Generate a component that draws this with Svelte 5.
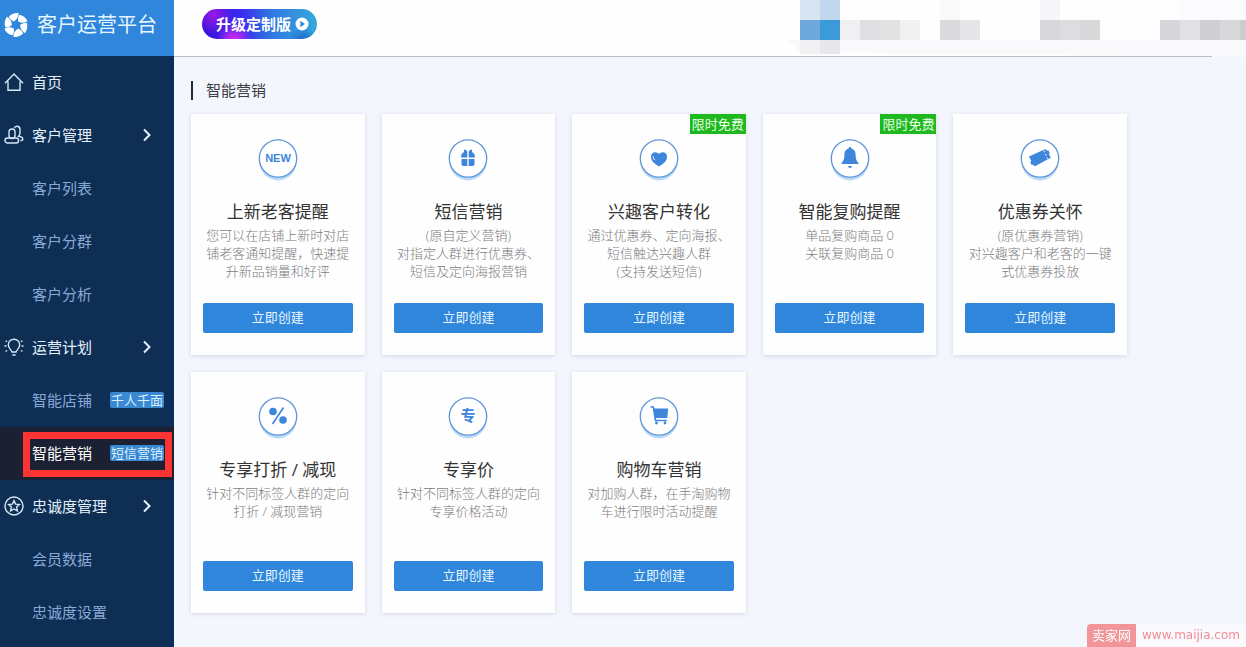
<script>
  const menu = [
    { label: '首页', icon: 'home' },
    { label: '客户管理', icon: 'users', group: true },
    { label: '客户列表' },
    { label: '客户分群' },
    { label: '客户分析' },
    { label: '运营计划', icon: 'bulb', group: true },
    { label: '智能店铺', tag: '千人千面' },
    { label: '智能营销', tag: '短信营销', active: true },
    { label: '忠诚度管理', icon: 'star', group: true },
    { label: '会员数据' },
    { label: '忠诚度设置' }
  ];

  const cards = [
    { icon: 'new', title: '上新老客提醒', lines: ['您可以在店铺上新时对店', '铺老客通知提醒，快速提', '升新品销量和好评'] },
    { icon: 'gift', title: '短信营销', lines: ['(原自定义营销)', '对指定人群进行优惠券、', '短信及定向海报营销'] },
    { icon: 'heart', title: '兴趣客户转化', free: true, lines: ['通过优惠券、定向海报、', '短信触达兴趣人群', '(支持发送短信)'] },
    { icon: 'bell', title: '智能复购提醒', free: true, lines: ['单品复购商品 0', '关联复购商品 0'] },
    { icon: 'ticket', title: '优惠券关怀', lines: ['(原优惠券营销)', '对兴趣客户和老客的一键', '式优惠券投放'] },
    { icon: 'percent', title: '专享打折 / 减现', lines: ['针对不同标签人群的定向', '打折 / 减现营销'] },
    { icon: 'special', title: '专享价', lines: ['针对不同标签人群的定向', '专享价格活动'] },
    { icon: 'cart', title: '购物车营销', lines: ['对加购人群，在手淘购物', '车进行限时活动提醒'] }
  ];

  // account area is masked with 20px blocks: x, y, width, height, colour
  const blocks = [
    [20, 0, 20, 20, '#d7e4f2'],
    [40, 0, 20, 20, '#c1d7ee'],
    [160, 0, 20, 20, '#f9f9fa'],
    [260, 0, 20, 20, '#f7f7f9'],
    [400, 0, 66, 20, '#fbfafc'],
    [20, 20, 20, 20, '#6fa8dc'],
    [40, 20, 20, 20, '#3b9bd9'],
    [60, 20, 20, 20, '#f0f0f2'],
    [80, 20, 20, 20, '#dfdee0'],
    [100, 20, 20, 20, '#e2e2e3'],
    [120, 20, 20, 20, '#f1f1f3'],
    [160, 20, 20, 20, '#dadadc'],
    [180, 20, 20, 20, '#e5e5e7'],
    [260, 20, 20, 20, '#d8d8da'],
    [280, 20, 20, 20, '#dddde0'],
    [300, 20, 20, 20, '#d9d9dc'],
    [380, 20, 20, 20, '#d6d5d9'],
    [400, 20, 20, 20, '#e1e1e4'],
    [420, 20, 20, 20, '#cfced2'],
    [440, 20, 20, 20, '#d7d8da'],
    [460, 20, 6, 20, '#cccccf'],
    [20, 40, 20, 14, '#f1f0f3'],
    [40, 40, 20, 14, '#e7e7ec']
  ];
</script>

<div class="layout">
  <aside class="sidebar">
    <div class="brand">
      <svg class="brand-logo" viewBox="0 0 26 26" aria-hidden="true">
        {#each [0, 60, 120, 180, 240, 300] as angle}
          <path d="M5.800 4.800C8.400 1.800 12 .6 15.600 1.200 15.600 4.600 14 7.400 11 9.400 8.800 8.600 6.800 7.200 5.800 4.800z" transform="rotate({angle} 13 13)" />
        {/each}
      </svg>
      <span>客户运营平台</span>
    </div>

    <nav>
      {#each menu as item}
        <a href="#menu" class="menu-item" class:top={item.icon} class:active={item.active}>
          <span class="menu-icon">
            {#if item.icon === 'home'}
              <svg viewBox="0 0 20 20"><path d="M1 11.2 10 2l9 9.2M4 9.5V18.2h12V9.5" /></svg>
            {:else if item.icon === 'users'}
              <svg viewBox="0 0 20 20">
                <rect x="5" y="4" width="6" height="9.5" rx="3" />
                <path d="M10.2 3.2C10.6 1.8 11.8 1.2 13 1.2c1.8 0 3 1.3 3 3.2v3c0 1.8-.4 2.8-1.4 3.8 2.8.4 4.2 1.4 4.2 3 0 .9-.6 1.3-2.4 1.3" />
                <rect x="1" y="13" width="13.6" height="5" rx="2.5" />
              </svg>
            {:else if item.icon === 'bulb'}
              <svg viewBox="0 0 20 20">
                <path d="M8 15C7.600 13 4.300 11.800 4.300 7.800 4.300 4.600 6.800 2.200 10 2.200s5.700 2.400 5.700 5.600c0 4-3.300 5.200-3.700 7.200zM8.400 18h3.200M0.500 9h2M17.500 9h2M1.600 3.800l1.500.9M18.400 3.800l-1.500.9M1.600 14.400l1.500-.9M18.400 14.400l-1.500-.9" />
              </svg>
            {:else if item.icon === 'star'}
              <svg viewBox="0 0 20 20">
                <circle cx="10" cy="10" r="9" />
                <path d="M10 4.600l1.600 3.500 3.800.4-2.800 2.600.8 3.800L10 13l-3.400 1.900.8-3.800-2.800-2.600 3.800-.4z" />
              </svg>
            {/if}
          </span>
          <span class="menu-label">{item.label}</span>
          {#if item.tag}
            <span class="menu-tag">{item.tag}</span>
          {/if}
          {#if item.group}
            <svg class="arrow" viewBox="0 0 10 14"><path d="M2 1.500 7.500 7 2 12.500" /></svg>
          {/if}
        </a>
      {/each}
    </nav>
  </aside>

  <div class="content">
    <header class="topbar">
      <button class="upgrade">
        <span>升级定制版</span>
        <svg viewBox="0 0 14 14" aria-hidden="true">
          <circle cx="7" cy="7" r="6.500" />
          <path d="M5.300 3.800 10 7 5.300 10.200z" />
        </svg>
      </button>
      <svg class="account" viewBox="0 0 466 56" aria-hidden="true">
        <path class="haze" d="M8 40H466V56H350L20 52z" />
        {#each blocks as [x, y, w, h, fill]}
          <rect {x} {y} width={w} height={h} {fill} />
        {/each}
      </svg>
    </header>

    <main>
      <h2>智能营销</h2>
      <div class="cards">
        {#each cards as card}
          <section class="card">
            {#if card.free}
              <span class="free">限时免费</span>
            {/if}
            <svg class="card-icon" viewBox="0 0 42 44" aria-hidden="true">
              <circle class="shade" cx="21" cy="24" r="18.500" />
              <circle class="ring" cx="21" cy="20.500" r="18.700" />
              {#if card.icon === 'new'}
                <text class="new" x="21" y="24">NEW</text>
              {:else if card.icon === 'gift'}
                <path d="M14 19.500q0-4 3.200-5.400-1.200-1.800.3-2.500 1.900 0 2.800 2.200V19.500zM28 19.500q0-4-3.200-5.400 1.200-1.800-.3-2.500-1.900 0-2.800 2.200V19.500zM14.500 21h5.800V28H16.500q-2 0-2-2zM27.500 21h-5.800V28H25.500q2 0 2-2z" />
              {:else if card.icon === 'heart'}
                <path d="M21 28.500c-4-2.600-8-5.400-8-9.600 0-3 2-4.600 4.200-4.600 1.600 0 2.900.7 3.800 1.800.9-1.100 2.200-1.800 3.800-1.800 2.200 0 4.200 1.600 4.200 4.600 0 4.200-4 7-8 9.600z" />
                <path class="glint" d="M15.200 18.600q.1 2 1.600 3.600" />
              {:else if card.icon === 'bell'}
                <path d="M19.600 10.500q0-1.400 1.400-1.400t1.400 1.400c3 .8 4.200 3.200 4.200 6.200 0 4.400 1 6.400 2.800 8v1.300H12.600v-1.300c1.800-1.600 2.800-3.600 2.800-8 0-3 1.200-5.400 4.200-6.200zM19 28h4q-.5 2-2 2t-2-2z" />
              {:else if card.icon === 'ticket'}
                <path d="M10 18.500 26.500 11q.6 2.200 2.900 1.300l1.300 2.900q-1.400 1.300.1 2.800l1.200 1.600L15.600 28.600q-.4-2.400-3-1.500l-1.300-3q1.700-1.300.2-2.700z" />
                <path class="glint" d="M24.800 12.600l.8 1.700M26.400 16l.8 1.700M28 19.400l.5 1.200" />
              {:else if card.icon === 'percent'}
                <circle cx="16" cy="15.500" r="3.800" />
                <circle cx="26" cy="24" r="3.800" />
                <path class="line" d="M26.500 11.500 15.500 28" />
              {:else if card.icon === 'special'}
                <text class="char" x="21" y="25">专</text>
              {:else if card.icon === 'cart'}
                <path d="M15.500 12.500H30.200l-1 9.500H17.200z" />
                <path class="line" d="M12.500 11h2.800l2.200 13.500h11.300" />
                <circle cx="18.500" cy="27" r="1.400" />
                <circle cx="27" cy="27" r="1.400" />
              {/if}
            </svg>
            <h3>{card.title}</h3>
            <p>
              {#each card.lines as line}
                <span>{line}</span>
              {/each}
            </p>
            <button class="create">立即创建</button>
          </section>
        {/each}
      </div>
    </main>
  </div>

  <div class="watermark">
    <span class="site">卖家网</span>
    <span class="url">www.maijia.com</span>
  </div>
</div>

<style>
  :global(body) {
    font-family: "Open Sans", "Noto Sans CJK SC", sans-serif;
    background: #f4f6fe;
  }

  .layout {
    display: flex;
    min-height: 100vh;
  }

  .sidebar {
    flex: 0 0 174px;
    background: linear-gradient(90deg, #0f2e54 95%, #0b2b60);
  }

  .brand {
    display: flex;
    align-items: center;
    gap: 8px;
    height: 56px;
    padding: 0 0 6px 3px;
    box-sizing: border-box;
    background: #2f86db;
    color: #e6f6ff;
    font-size: 20px;
    line-height: 28px;
    white-space: nowrap;
  }

  .brand-logo {
    width: 26px;
    height: 26px;
    fill: #fff;
  }

  .menu-item {
    position: relative;
    display: flex;
    align-items: center;
    height: 53px;
    padding: 0 10px 2px 4px;
    box-sizing: border-box;
    color: #87a9d6;
    font-size: 15px;
    line-height: 20px;
    text-decoration: none;
    white-space: nowrap;
  }

  .menu-item.top {
    color: #e4f1fc;
  }

  .menu-item.active {
    background: #1c2033;
    color: #fff;
  }

  /* highlight frame round the current entry */
  .menu-item.active::after {
    content: "";
    position: absolute;
    inset: 5px 2px 3px 23px;
    border: 7px solid #fd3433;
  }

  .menu-icon {
    flex: 0 0 28px;
    height: 20px;
  }

  .menu-icon svg {
    width: 20px;
    height: 20px;
    fill: none;
    stroke: #d5e8f8;
    stroke-width: 1.4;
  }

  .menu-tag {
    margin-left: auto;
    padding: 0 1px;
    border-radius: 2px;
    background: #3a87d2;
    color: #d9f0ff;
    font-size: 13px;
    line-height: 16px;
  }

  .arrow {
    width: 10px;
    height: 14px;
    margin: 0 12px 0 auto;
    fill: none;
    stroke: #e4f1fc;
    stroke-width: 2;
  }

  .content {
    flex: 1;
    min-width: 0;
  }

  .topbar {
    display: flex;
    align-items: flex-start;
    justify-content: space-between;
    height: 57px;
    box-sizing: border-box;
    padding-left: 28px;
    border-bottom: 1px solid;
    border-image: linear-gradient(90deg, #bcbbc4 calc(100% - 35px), #f9f9fb calc(100% - 35px)) 1;
    background: #fefefe;
  }

  .upgrade {
    display: flex;
    align-items: center;
    gap: 4px;
    height: 30px;
    margin-top: 9px;
    padding: 0 8px 0 14px;
    border: 0;
    border-radius: 15px;
    background:
      radial-gradient(circle at 28% 105%, #e329e8 0, #a42af0 8%, transparent 20%),
      radial-gradient(circle at 10% 20%, #9a18e8 0, transparent 18%),
      radial-gradient(circle at 88% 110%, #1c5fc4 0, transparent 14%),
      linear-gradient(90deg, #3a10d8, #3b2bf0 35%, #2f78e0 60%, #37a9dc);
    color: #fff;
    font: bold 15px/20px "Noto Sans CJK SC", sans-serif;
    white-space: nowrap;
    cursor: pointer;
  }

  .upgrade svg {
    width: 14px;
    height: 14px;
    fill: #fff;
  }

  .upgrade path {
    fill: #348fdc;
  }

  .account {
    flex: 0 1 466px;
    height: 56px;
  }

  .haze {
    fill: #f9f9fb;
  }

  main {
    padding: 24px 17px 34px;
  }

  h2 {
    margin: 0 0 14px;
    padding-left: 13px;
    border-left: 2px solid #26262e;
    color: #3c3c44;
    font-size: 15px;
    font-weight: 400;
    line-height: 19px;
  }

  .cards {
    display: grid;
    grid-template-columns: repeat(auto-fill, minmax(160px, 1fr));
    gap: 17px;
    max-width: 936px;
  }

  .card {
    position: relative;
    display: flex;
    flex-direction: column;
    align-items: center;
    padding: 24px 12px 22px;
    background: #fefefe;
    box-shadow: 0 1px 4px rgba(60, 60, 100, 0.18);
    text-align: center;
  }

  .free {
    position: absolute;
    top: 0;
    right: 0;
    padding: 0 2px;
    background: #1db91f;
    color: #e9ffe6;
    font-size: 13px;
    line-height: 20px;
  }

  .card-icon {
    width: 42px;
    height: 44px;
    fill: #3d86dc;
  }

  .shade {
    fill: #b9daf8;
  }

  .ring {
    fill: #fff;
    stroke: #6096d8;
    stroke-width: 1.3;
  }

  .glint {
    fill: none;
    stroke: #fff;
    stroke-width: 1;
  }

  .line {
    fill: none;
    stroke: #3d86dc;
    stroke-width: 1.6;
  }

  .new {
    font: bold 11px "Liberation Sans Narrow", "Liberation Sans", sans-serif;
    text-anchor: middle;
  }

  .char {
    font-size: 15px;
    font-weight: bold;
    text-anchor: middle;
  }

  h3 {
    margin: 18px 0 2px;
    color: #333;
    font-size: 17px;
    font-weight: 400;
    line-height: 24px;
    white-space: nowrap;
  }

  p {
    min-height: 54px;
    margin: 0 0 23px;
    color: #7c7c80;
    font-size: 13px;
    font-weight: 300;
    line-height: 18px;
    white-space: nowrap;
  }

  p span {
    display: block;
  }

  .create {
    align-self: stretch;
    height: 30px;
    padding: 0 0 3px;
    border: 0;
    border-radius: 2px;
    background: #2f86db;
    color: #e8f7ff;
    font: 13px/20px "Noto Sans CJK SC", sans-serif;
    cursor: pointer;
  }

  .watermark {
    position: fixed;
    right: 0;
    bottom: 0;
    display: flex;
    border-radius: 4px 0 0 0;
    overflow: hidden;
    background: #f9f9fe;
    font-size: 13px;
    line-height: 23px;
  }

  .site {
    padding: 0 5px;
    background: #f19598;
    color: #fff;
  }

  .url {
    padding: 0 6px;
    color: #ef8f94;
    font-family: "DejaVu Sans", sans-serif;
    font-size: 12px;
  }
</style>
